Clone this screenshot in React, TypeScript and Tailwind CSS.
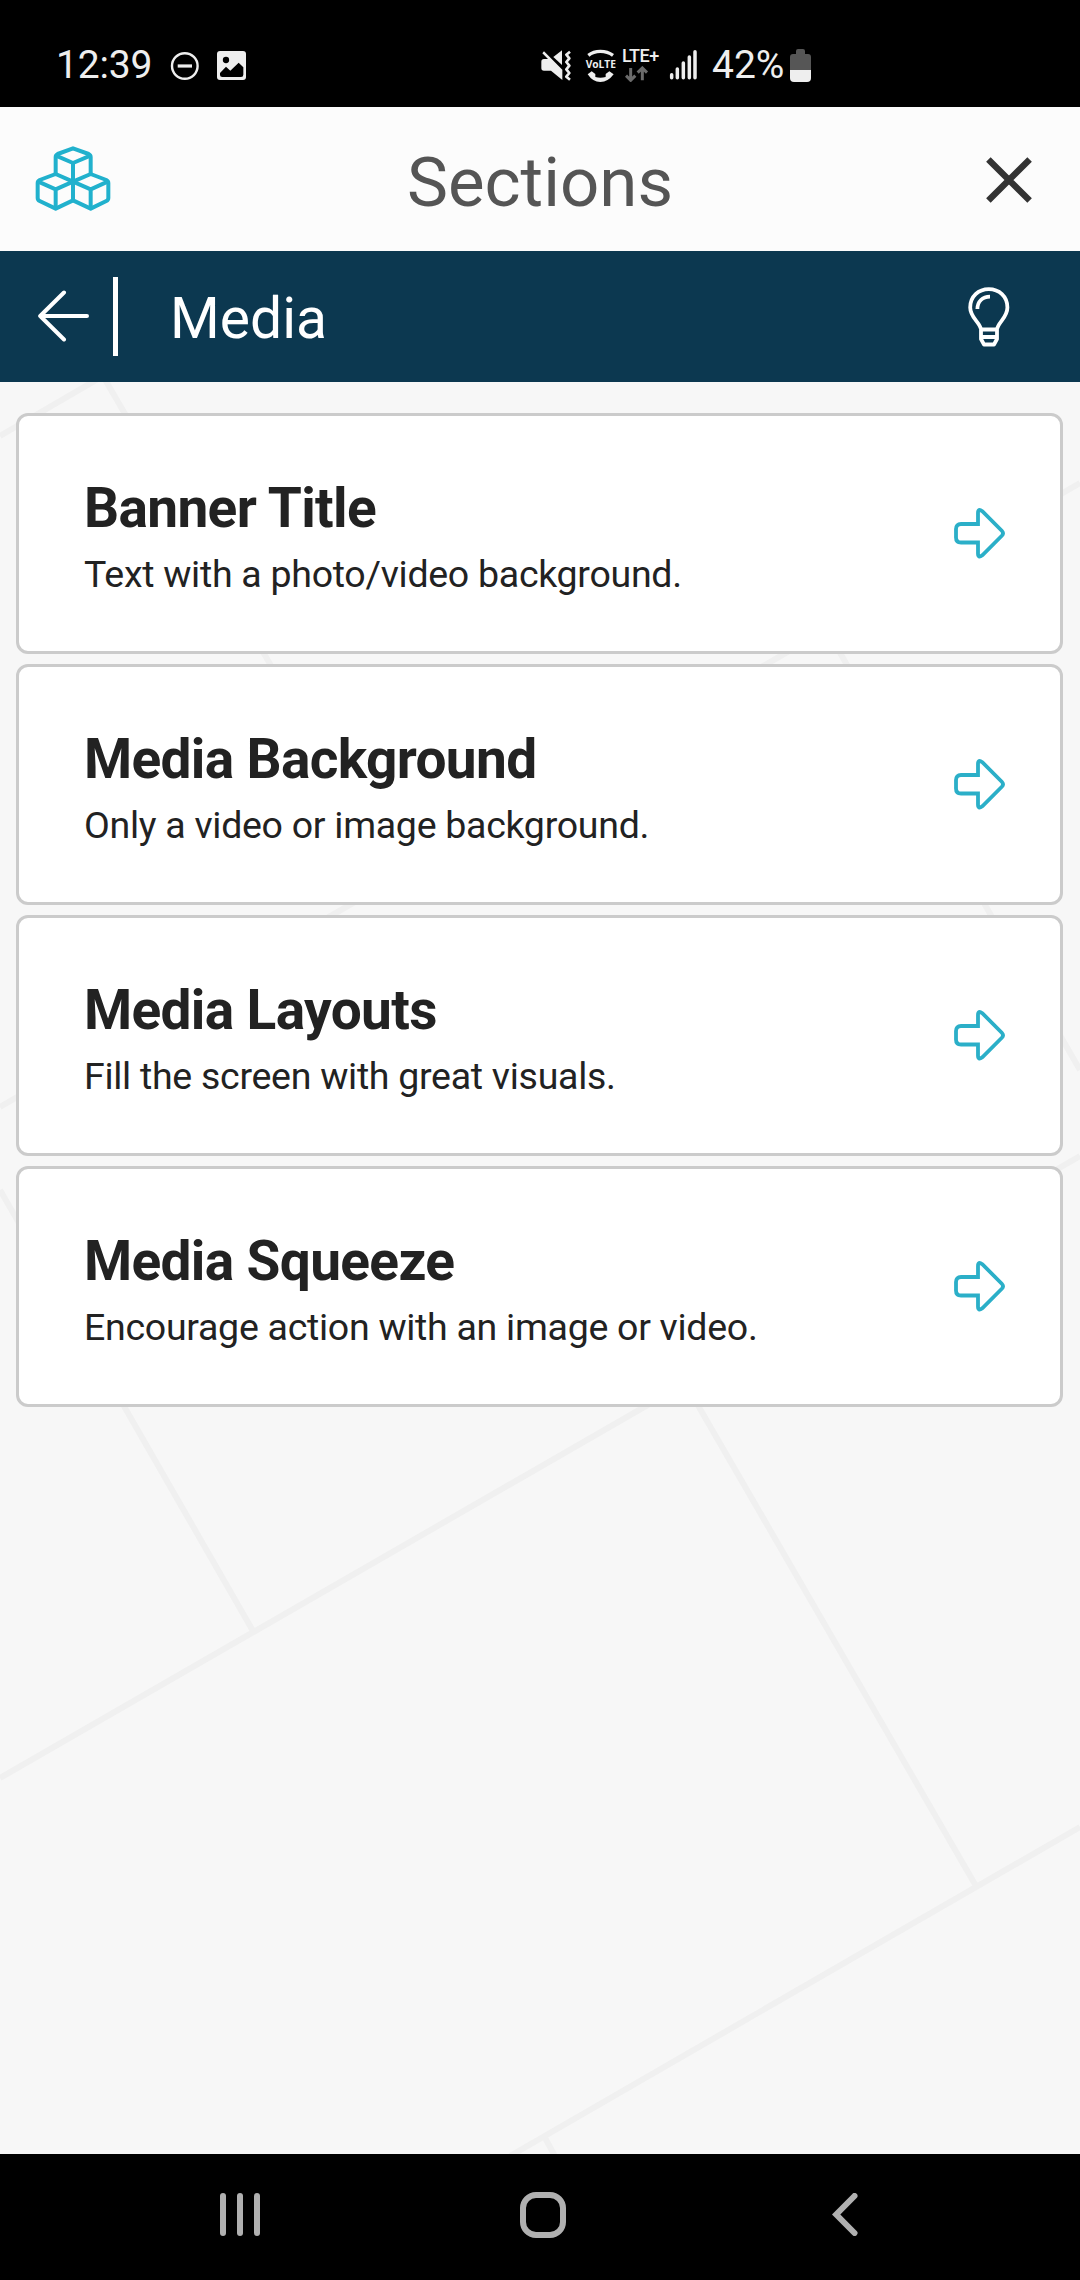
const sections = [
  { title: "Banner Title", text: "Text with a photo/video background." },
  { title: "Media Background", text: "Only a video or image background." },
  { title: "Media Layouts", text: "Fill the screen with great visuals." },
  { title: "Media Squeeze", text: "Encourage action with an image or video." },
];

function StatusBar() {
  return (
    <div className="flex h-[107px] shrink-0 items-start bg-black pt-[42px] pl-[56px] text-[#eeeeee]">
      <span className="w-[114px] text-[39px] leading-[46px] tracking-[-0.2px]">12:39</span>

      {/* do not disturb */}
      <svg className="mt-[9px] h-[30px] w-[30px]" viewBox="0 0 30 30" fill="none" stroke="currentColor">
        <circle cx="14.8" cy="15" r="12.8" strokeWidth="2.4" />
        <path d="M7.7 15H22" strokeWidth="3.2" />
      </svg>

      {/* gallery */}
      <svg className="mt-[9px] ml-[17px] h-[29px] w-[29px]" viewBox="0 0 87 87">
        <rect width="87" height="87" rx="9" fill="currentColor" />
        <circle cx="27" cy="27" r="9.5" fill="#000" />
        <path d="M9 66L27 47L40 59L65 35L79 49V71Q79 78 72 78H16Q9 78 9 72Z" fill="#000" />
      </svg>

      {/* sound off */}
      <svg className="mt-[8px] ml-[295px] h-[32px] w-[30px]" viewBox="62 60 90 96">
        <path d="M63 95Q63 87 71 87H83L66 70L71 64L126 119V150L92 122H71Q63 122 63 114Z" fill="currentColor" />
        <path d="M99 81L125 61V105Z" fill="currentColor" />
        <path
          d="M149 65L138 74L147 85L138 96L147 107L138 118L147 129L138 140L149 149"
          fill="none"
          stroke="currentColor"
          strokeWidth="8"
          strokeLinejoin="round"
        />
      </svg>

      {/* VoLTE */}
      <svg className="mt-[7px] ml-[12px] h-[34px] w-[36px]" viewBox="189 57 108 102">
        <path d="M205 76Q220 64 241 64Q263 64 279 76" fill="none" stroke="currentColor" strokeWidth="10" />
        <text
          x="197"
          y="115"
          textLength="91"
          lengthAdjust="spacingAndGlyphs"
          className="fill-current font-['Open_Sans',sans-serif] text-[34px] font-bold"
        >
          VoLTE
        </text>
        <path
          d="M203 133L215 124L226 132V141Q241 145 257 141V132L268 124L281 133Q264 156 241 156Q218 156 203 133Z"
          fill="currentColor"
        />
      </svg>

      <div className="ml-[3px] flex w-[47px] flex-col pt-[4px]">
        <span className="text-[18px] leading-[20px] font-medium tracking-[-0.5px]">LTE+</span>
        <svg className="ml-[3px] h-[16px] w-[24px]" viewBox="316 109 72 48" fill="none" stroke="#6b6b6b" strokeWidth="9">
          <path d="M333 115V150M319 138L333 152L347 138" />
          <path d="M368 152V117M354 129L368 115L382 129" />
        </svg>
      </div>

      <svg
        className="mt-[7px] h-[32px] w-[30px]"
        viewBox="446 56 90 96"
        stroke="currentColor"
        strokeWidth="10.5"
        strokeLinecap="round"
      >
        <path d="M454 133V142M471 116V142M489 98V142M507 80V142M524 64V142" />
      </svg>

      <span className="ml-[13px] w-[78px] text-[39px] leading-[46px]">42%</span>

      <svg className="mt-[7px] h-[33px] w-[21px]" viewBox="0 0 21 33">
        <path d="M6 5V2Q6 0 8 0H13Q15 0 15 2V5H18Q21 5 21 8V21H0V8Q0 5 3 5Z" fill="#565656" />
        <path d="M0 21H21V29Q21 33 17 33H4Q0 33 0 29Z" fill="currentColor" />
      </svg>
    </div>
  );
}

function Header() {
  return (
    <header className="flex h-[144px] shrink-0 items-center justify-between bg-[#fcfcfc] pr-[48px] pl-[35px]">
      <svg
        className="mb-[2px] h-[65px] w-[76px]"
        viewBox="105 136 228 195"
        fill="none"
        stroke="#21b1cd"
        strokeWidth="12"
        strokeLinejoin="round"
      >
        <path d="M167 220V169Q167 163 173 160L219 143L266 160Q272 163 272 169V220" />
        <path d="M168 165L219 187L271 165M219 187V299" />
        <path d="M219 243L167 220L119 238Q113 241 113 247V292Q113 298 119 301L167 324L219 299" />
        <path d="M115 243L167 266L219 243M167 266V324" />
        <path d="M219 243L272 220L319 238Q325 241 325 247V292Q325 298 319 301L272 324L219 299" />
        <path d="M323 243L272 266L219 243M272 266V324" />
      </svg>
      <h1 className="mr-[17px] pt-[7px] text-[69px] leading-[80px] text-[#555555]">Sections</h1>
      <svg className="mt-[2px] h-[46px] w-[46px]" viewBox="0 0 46 46" stroke="#333333" strokeWidth="6.4">
        <path d="M2.4 2.4L43.6 43.6M43.6 2.4L2.4 43.6" />
      </svg>
    </header>
  );
}

function NavBar() {
  return (
    <nav className="flex h-[131px] shrink-0 items-center bg-[#0c3850] pr-[70px] pl-[37px] text-white">
      <svg
        className="mb-[1px] h-[52px] w-[53px]"
        viewBox="0 0 53 52"
        fill="none"
        stroke="currentColor"
        strokeWidth="4"
        strokeLinecap="round"
        strokeLinejoin="round"
      >
        <path d="M27 2.5L3.2 26L27 49.5M3.2 26H50" />
      </svg>
      <div className="ml-[23px] h-[79px] w-[5px] bg-white" />
      <h2 className="ml-[52px] flex-1 pt-1 text-[57px] leading-[66px]">Media</h2>
      <svg
        className="h-[60px] w-[42px]"
        viewBox="0 0 42 60"
        fill="none"
        stroke="currentColor"
        strokeWidth="3.8"
        strokeLinejoin="round"
      >
        <path d="M13 42.5C12 35 2.2 31 2.2 20.5C2.2 9.5 10.5 2.2 20.8 2.2S39.4 9.5 39.4 20.5C39.4 31 30 35 29 42.5" />
        <path d="M11.5 42.5H30.5M13 42.5V52L16 57.5H26L29 52V42.5M13 50H29" />
        <path d="M9.4 22C9.4 14.5 14.5 9.6 22 9.6" />
      </svg>
    </nav>
  );
}

function ArrowIcon() {
  return (
    <svg className="h-[51px] w-[52px]" viewBox="0 0 52 51" fill="none" stroke="#2bafc8" strokeWidth="3.8">
      <path d="M24 16H7Q2 16 2 21V29.5Q2 34.5 7 34.5H24V45.5Q24 50.5 28.3 47.3L47.8 27.8Q50.2 25.2 47.8 22.7L28.3 3.2Q24 0 24 5Z" />
    </svg>
  );
}

function Backdrop() {
  return (
    <svg
      className="absolute inset-0 h-full w-full"
      viewBox="0 382 1080 1772"
      preserveAspectRatio="none"
      fill="none"
      stroke="#f0f0f0"
      strokeWidth="6"
    >
      <path d="M0 436L103 376L270 664L297 711" />
      <path d="M0 1107L1080 483" />
      <path d="M820 618L1080 1070" />
      <path d="M0 1778L1080 1156" />
      <path d="M0 1190L253 1631M681 1376L976 1886" />
      <path d="M1080 1827L510 2156M544 2136L556 2158" />
    </svg>
  );
}

export default function App() {
  return (
    <div className="flex h-[2280px] w-[1080px] flex-col overflow-hidden bg-[#f7f7f7] font-[Roboto,sans-serif]">
      <StatusBar />
      <Header />
      <NavBar />

      <main className="relative flex-1">
        <Backdrop />
        <div className="relative flex flex-col gap-[10px] pt-[31px] pr-[17px] pl-4">
          {sections.map((section) => (
            <div
              key={section.title}
              className="flex h-[241px] items-start justify-between rounded-[12px] border-[3px] border-[#cbcbcb] bg-white pr-[54px] pl-[65px] text-[#222222]"
            >
              <div className="pt-[60px]">
                <h3 className="text-[55px] leading-[64px] font-bold tracking-[-0.65px]">{section.title}</h3>
                <p className="mt-2 text-[37.5px] leading-[52px] tracking-[-0.28px]">{section.text}</p>
              </div>
              <div className="pt-[92px]">
                <ArrowIcon />
              </div>
            </div>
          ))}
        </div>
      </main>

      <footer className="flex h-[126px] shrink-0 items-center bg-black pb-[5px] pl-[220px]">
        <div className="flex gap-[11px]">
          <div className="h-[43px] w-[6px] rounded-full bg-[#b0b0b0]" />
          <div className="h-[43px] w-[6px] rounded-full bg-[#b0b0b0]" />
          <div className="h-[43px] w-[6px] rounded-full bg-[#b0b0b0]" />
        </div>
        <div className="ml-[260px] h-[46px] w-[46px] rounded-[16px] border-[6px] border-[#b0b0b0]" />
        <svg
          className="ml-[266px] h-[43px] w-[26px]"
          viewBox="0 0 26 43"
          fill="none"
          stroke="#b0b0b0"
          strokeWidth="6"
          strokeLinecap="round"
        >
          <path d="M22.5 3L4.2 21.5L22.5 40" />
        </svg>
      </footer>
    </div>
  );
}
